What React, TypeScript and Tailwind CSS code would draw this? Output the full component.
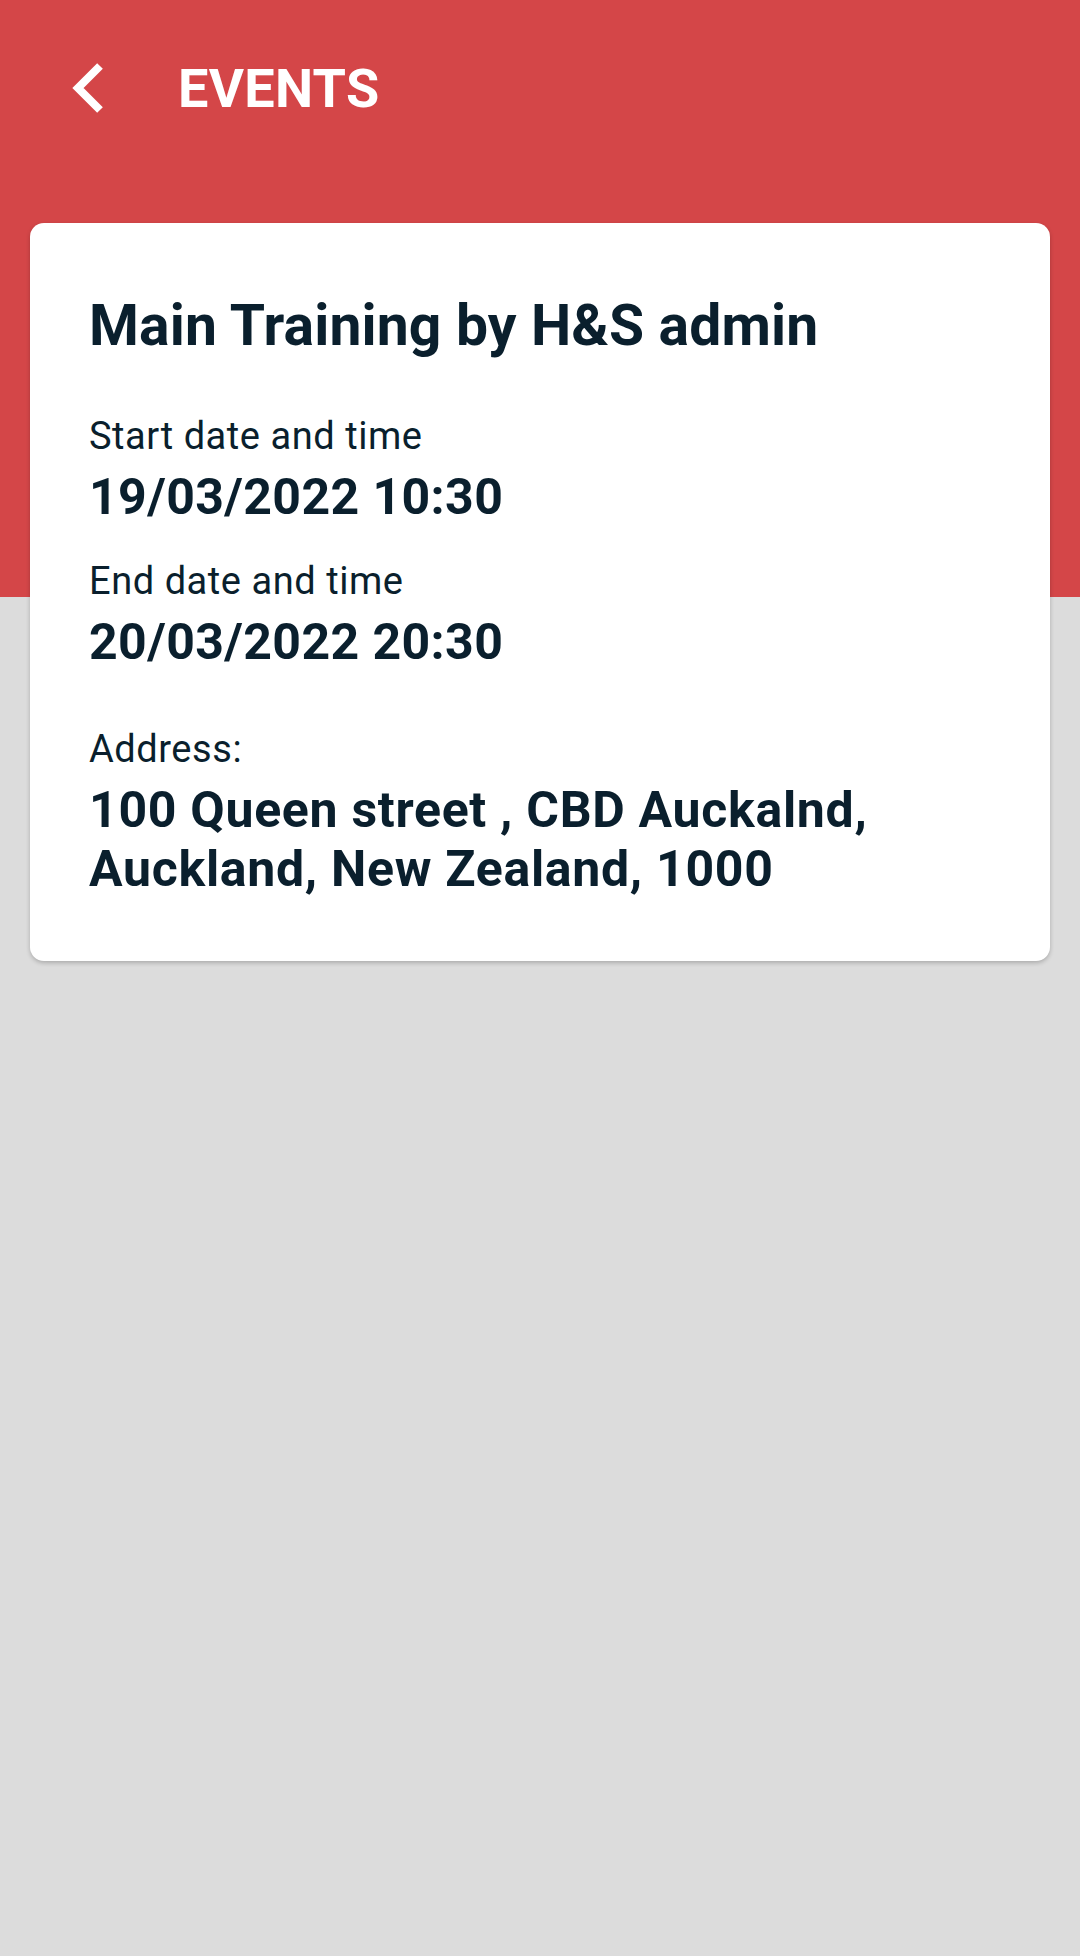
import React from 'react';

const details = [
  { label: 'Start date and time', value: '19/03/2022 10:30' },
  { label: 'End date and time', value: '20/03/2022 20:30' },
];

function BackIcon() {
  return (
    <svg width="32" height="52" viewBox="0 0 32 52" className="shrink-0">
      <polyline
        points="28,4 6,26 28,48"
        fill="none"
        stroke="#ffffff"
        strokeWidth="8"
        strokeLinecap="butt"
        strokeLinejoin="miter"
      />
    </svg>
  );
}

export default function App() {
  return (
    <div
      className="min-h-[1956px] w-full bg-[linear-gradient(to_bottom,#D44648_597px,#DCDCDC_597px)] text-[#0A1F2D]"
      style={{ fontFamily: 'Roboto, "Noto Sans", sans-serif' }}
    >
      {/* Top bar */}
      <header className="h-[223px] pt-[62px] pl-[72px] flex items-start">
        <BackIcon />
        <h1 className="ml-[74px] text-[54px] leading-[54px] font-bold text-white tracking-[0.3px]">EVENTS</h1>
      </header>

      {/* Event card */}
      <div className="mx-[30px] rounded-[14px] bg-white pl-[59px] pr-[40px] pt-[69px] pb-[62px] shadow-[0_2px_4px_rgba(0,0,0,0.22)]">
        <h2 className="text-[57px] leading-[67px] font-bold tracking-[0.15px]">Main Training by H&amp;S admin</h2>

        <div className="mt-[55px] flex flex-col">
          {details.map((d, i) => (
            <div key={d.label} className={i > 0 ? 'mt-[32px]' : ''}>
              <p className="text-[38px] leading-[45px] tracking-[0.55px]">{d.label}</p>
              <p className="mt-[9px] text-[50px] leading-[59px] font-bold tracking-[0.4px]">{d.value}</p>
            </div>
          ))}
        </div>

        <div className="mt-[55px]">
          <p className="text-[38px] leading-[45px] tracking-[0.55px]">Address:</p>
          <p className="mt-[9px] text-[50px] leading-[59px] font-bold tracking-[0.7px]">
            100 Queen street , CBD Auckalnd, Auckland, New Zealand, 1000
          </p>
        </div>
      </div>
    </div>
  );
}
